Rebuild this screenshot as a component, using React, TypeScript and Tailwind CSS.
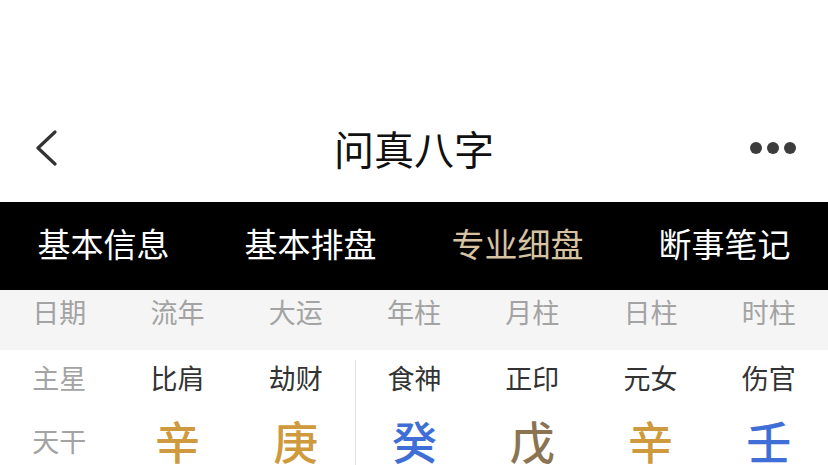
const FONT = { fontFamily: '"Noto Sans CJK SC", "Noto Sans", sans-serif' };

const TABS = [
  { label: "基本信息", active: false },
  { label: "基本排盘", active: false },
  { label: "专业细盘", active: true },
  { label: "断事笔记", active: false },
];

const HEADERS = ["日期", "流年", "大运", "年柱", "月柱", "日柱", "时柱"];

const STARS = ["比肩", "劫财", "食神", "正印", "元女", "伤官"];

const STEMS = [
  { ch: "辛", color: "text-[#cf9a3e]" },
  { ch: "庚", color: "text-[#cf9a3e]" },
  { ch: "癸", color: "text-[#3f6fd6]" },
  { ch: "戊", color: "text-[#8a7452]" },
  { ch: "辛", color: "text-[#cf9a3e]" },
  { ch: "壬", color: "text-[#3f6fd6]" },
];

export default function App() {
  return (
    <div className="w-[828px] h-[465px] overflow-hidden bg-white" style={FONT}>
      {/* status bar space */}
      <div className="h-[98px]" />

      {/* Nav bar */}
      <div className="relative h-[104px] flex items-center justify-between pl-[38px] pr-[32px] pb-[4px]">
        <svg width="22" height="36" viewBox="0 0 22 36" className="-ml-[2px]">
          <polyline
            points="19,2 2,18 19,34"
            fill="none"
            stroke="#333"
            strokeWidth="3.2"
            strokeLinecap="round"
            strokeLinejoin="round"
          />
        </svg>
        <div className="absolute inset-x-0 top-0 h-full flex items-center justify-center pb-[4px] pointer-events-none">
          <span className="text-[40px] leading-none text-[#111]">问真八字</span>
        </div>
        <div className="flex items-center gap-[5px]">
          <span className="size-[12px] rounded-full bg-[#3c3c3c]" />
          <span className="size-[12px] rounded-full bg-[#3c3c3c]" />
          <span className="size-[12px] rounded-full bg-[#3c3c3c]" />
        </div>
      </div>

      {/* Tab strip */}
      <div className="h-[88px] bg-black grid grid-cols-4 items-center pb-[6px]">
        {TABS.map((t) => (
          <div
            key={t.label}
            className={`text-center text-[33px] leading-none ${t.active ? "text-[#d7c3a3]" : "text-white"}`}
          >
            {t.label}
          </div>
        ))}
      </div>

      {/* Column headers */}
      <div className="h-[60px] bg-[#f5f5f5] grid grid-cols-7 items-start pt-[5px]">
        {HEADERS.map((h) => (
          <div key={h} className="text-center text-[27px] leading-[34px] text-[#a3a3a3]">
            {h}
          </div>
        ))}
      </div>

      {/* Body rows */}
      <div className="mt-[10px] grid grid-cols-7">
        <div className="h-[34px] flex items-center justify-center text-[27px] leading-none text-[#a3a3a3]">主星</div>
        {STARS.map((s, i) => (
          <div
            key={i}
            className={`h-[34px] flex items-center justify-center text-[27px] leading-none text-[#333] ${i === 2 ? "border-l border-[#dedede]" : ""}`}
          >
            {s}
          </div>
        ))}

        <div className="h-[83px] pt-[23px] flex items-start justify-center">
          <span className="h-[46px] flex items-center text-[27px] leading-none text-[#a3a3a3]">天干</span>
        </div>
        {STEMS.map((s, i) => (
          <div
            key={i}
            className={`h-[83px] pt-[23px] flex items-start justify-center ${i === 2 ? "border-l border-[#dedede]" : ""}`}
          >
            <span className={`h-[46px] flex items-center text-[45px] leading-none font-medium ${s.color}`}>{s.ch}</span>
          </div>
        ))}
      </div>
    </div>
  );
}
